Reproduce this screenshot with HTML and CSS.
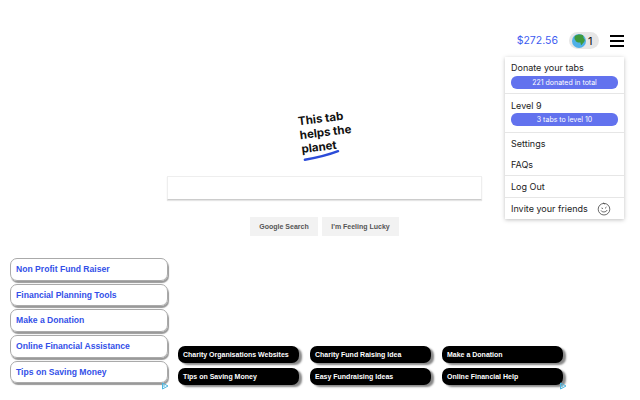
FILE: index.html
```html
<!DOCTYPE html>
<html lang="en">
<head>
    <meta charset="UTF-8">
    <meta name="viewport" content="width=device-width, initial-scale=1.0">
    <title>New Tab</title>
    <link rel="stylesheet" href="styles.css">
</head>
<body>
    <div class="page">
        <header class="topbar">
            <span class="money">$272.56</span>
            <span class="hearts">
                <svg class="globe" width="14" height="14" viewBox="0 0 14 14">
                    <circle cx="7" cy="7" r="7" fill="#4fb0e8"/>
                    <path d="M3 2 C5 0.2 9 0 11 1.2 C12 3 11 4 12.5 5 C13.5 7 11.5 8.5 10 10.5 C9 12 8.5 10 8.5 8.5 C7 8.5 5 8.5 4 7.5 C3.5 6 1.5 4.5 3 2 Z" fill="#3f9a3c"/>
                </svg>
                <span>1</span>
            </span>
            <span class="burger"><i></i><i></i><i></i></span>
        </header>

        <nav class="menu">
            <div class="menu-section donate">
                <div class="menu-title">Donate your tabs</div>
                <div class="pill">221 donated in total</div>
            </div>
            <div class="menu-section level">
                <div class="menu-title">Level 9</div>
                <div class="pill">3 tabs to level 10</div>
            </div>
            <div class="menu-section links">
                <a>Settings</a>
                <a>FAQs</a>
            </div>
            <div class="menu-section links">
                <a>Log Out</a>
            </div>
            <div class="menu-section links invite">
                <a>Invite your friends</a>
                <svg width="14" height="14" viewBox="0 0 14 14" fill="none" stroke="#444" stroke-width="0.8">
                    <circle cx="7" cy="7.2" r="5.8"/>
                    <path d="M4 8.5 C5 10.5 9 10.5 10.2 8"/>
                    <path d="M4.5 6 L6 6.6 M9.5 5 L8 6.4"/>
                    <path d="M6.2 0.8 L7.8 2.2"/>
                </svg>
            </div>
        </nav>

        <main class="center">
            <div class="logo">
                <div class="logo-text">This tab<br>helps the<br>planet</div>
                <svg class="logo-line" width="38" height="8" viewBox="0 0 38 8">
                    <path d="M2 6 C12 5.5 26 4 36 1.5" fill="none" stroke="#2b4bd8" stroke-width="2.4" stroke-linecap="round"/>
                </svg>
            </div>
            <div class="search-box"></div>
            <div class="search-buttons">
                <button>Google Search</button>
                <button>I'm Feeling Lucky</button>
            </div>
        </main>

        <section class="ads">
            <div class="ad-list">
                <a>Non Profit Fund Raiser</a>
                <a>Financial Planning Tools</a>
                <a>Make a Donation</a>
                <a>Online Financial Assistance</a>
                <a>Tips on Saving Money</a>
                <svg class="ad-mark" width="8" height="8" viewBox="0 0 8 8"><path d="M1.5 1 L7 4 L1.5 7 Z M3 2.8 L3 5.2" fill="none" stroke="#4db6e0" stroke-width="1"/></svg>
            </div>
            <div class="ad-grid">
                <a>Charity Organisations Websites</a>
                <a>Charity Fund Raising Idea</a>
                <a>Make a Donation</a>
                <a>Tips on Saving Money</a>
                <a>Easy Fundraising Ideas</a>
                <a>Online Financial Help</a>
                <svg class="ad-mark" width="8" height="8" viewBox="0 0 8 8"><path d="M1.5 1 L7 4 L1.5 7 Z M3 2.8 L3 5.2" fill="none" stroke="#4db6e0" stroke-width="1"/></svg>
            </div>
        </section>
    </div>
</body>
</html>
```

FILE: styles.css
```css
html, body {
    margin: 0;
    padding: 0;
    background: #fff;
}
.page {
    position: relative;
    width: 640px;
    height: 400px;
    overflow: hidden;
    font-family: "Inter", "Liberation Sans", sans-serif;
}
.topbar {
    display: flex;
    justify-content: flex-end;
    align-items: center;
    height: 17px;
    padding: 32px 16px 0 0;
}
.money {
    color: #3d5bf0;
    font-size: 10.5px;
    margin-right: 11px;
}
.hearts {
    display: flex;
    align-items: center;
    gap: 2px;
    box-sizing: border-box;
    width: 30px;
    height: 17px;
    padding-left: 3px;
    border-radius: 9px;
    background: #e6e6e6;
    font-size: 11px;
    color: #111;
    margin-right: 11px;
}
.burger {
    display: flex;
    flex-direction: column;
    gap: 3px;
}
.burger i {
    display: block;
    width: 14px;
    height: 2px;
    background: #000;
}
.menu {
    position: absolute;
    left: 505px;
    top: 57px;
    width: 119px;
    background: #fff;
    box-shadow: 0 1px 4px rgba(0,0,0,0.25);
    color: #222;
    font-size: 9px;
}
.menu-section {
    padding: 5px 6px;
    border-bottom: 1px solid #e6e6e6;
}
.menu-section:last-child {
    border-bottom: none;
}
.donate {
    padding-bottom: 4px;
}
.level {
    padding: 6px 6px;
}
.level .menu-title {
    margin-bottom: 1px;
}
.menu-title {
    line-height: 12px;
    margin-bottom: 2px;
}
.pill {
    height: 13px;
    line-height: 13px;
    border-radius: 6px;
    background: #6272ee;
    color: #fff;
    font-size: 7px;
    text-align: center;
}
.links {
    padding: 0 6px;
}
.links a {
    display: block;
    line-height: 21px;
}
.invite {
    display: flex;
    justify-content: space-between;
    align-items: center;
    padding-right: 13px;
}
.center {
    display: flex;
    flex-direction: column;
    align-items: center;
    width: 315px;
    margin: 62px 0 0 167px;
}
.logo {
    display: flex;
    flex-direction: column;
    transform: rotate(-7deg);
    align-self: flex-start;
    margin-left: 133px;
}
.logo-text {
    font-size: 11.5px;
    font-weight: 700;
    line-height: 14px;
    color: #111;
}
.logo-line {
    margin-top: -2px;
}
.search-box {
    box-sizing: border-box;
    width: 315px;
    height: 24px;
    margin-top: 17px;
    border: 1px solid #eee;
    border-bottom-color: #ccc;
    box-shadow: 0 1px 1px rgba(0,0,0,0.1);
}
.search-buttons {
    display: flex;
    gap: 4px;
    margin-top: 17px;
}
.search-buttons button {
    width: 68px;
    height: 19px;
    padding: 0;
    border: none;
    background: #f2f2f2;
    color: #555;
    font-family: "Liberation Sans", sans-serif;
    font-size: 7px;
    font-weight: 700;
}
.search-buttons button + button {
    width: 77px;
}
.ads {
    position: absolute;
    left: 10px;
    top: 258px;
    display: flex;
    align-items: flex-end;
    gap: 10px;
    font-family: "Liberation Sans", sans-serif;
    font-weight: 700;
    font-size: 8.6px;
}
.ad-list {
    position: relative;
    display: flex;
    flex-direction: column;
    gap: 3px;
}
.ad-list a {
    box-sizing: border-box;
    width: 158px;
    height: 22.7px;
    line-height: 20px;
    padding-left: 5px;
    border: 1px solid #aaa;
    border-radius: 7px;
    box-shadow: 1px 2px 1px #999;
    color: #3350e8;
}
.ad-grid {
    position: relative;
    display: grid;
    grid-template-columns: repeat(3, 121px);
    grid-auto-rows: 17px;
    gap: 5px 11px;
    margin-bottom: -2px;
    font-size: 7px;
}
.ad-grid a {
    line-height: 17px;
    padding-left: 5px;
    border-radius: 7px;
    background: #000;
    box-shadow: 3px 2px 2px #888;
    color: #fff;
}
.ad-mark {
    position: absolute;
    right: -1px;
    bottom: -7px;
}
.ad-grid .ad-mark {
    right: -4px;
    bottom: -5px;
}
```
